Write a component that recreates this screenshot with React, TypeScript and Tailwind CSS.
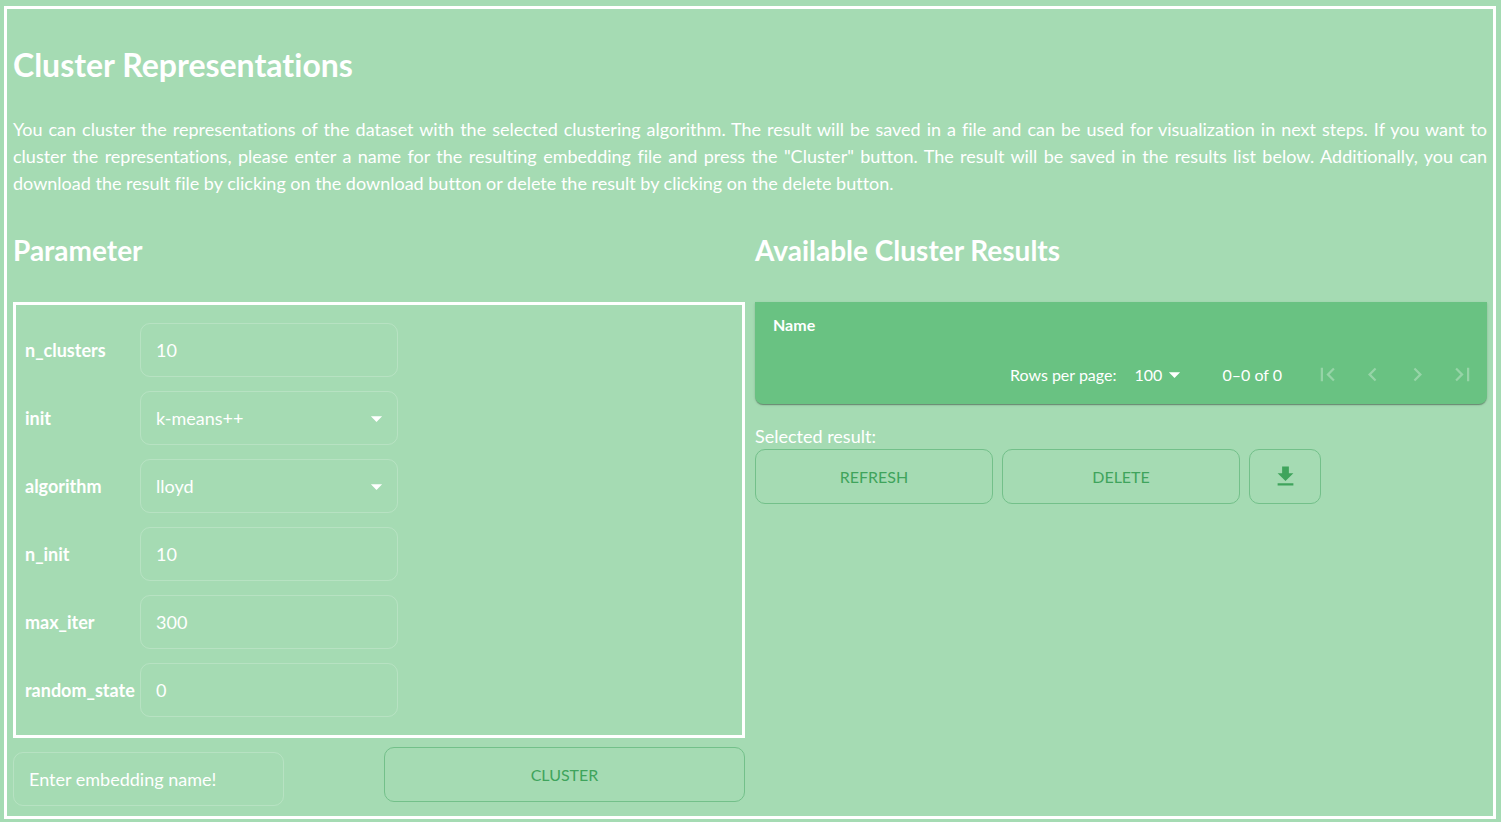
import { useState } from "react";
import type { ReactNode } from "react";
import { MdArrowDropDown, MdChevronLeft, MdChevronRight, MdFirstPage, MdLastPage } from "react-icons/md";

type Field = { name: string; value: string; options?: string[] };

const fields: Field[] = [
  { name: "n_clusters", value: "10" },
  { name: "init", value: "k-means++", options: ["k-means++", "random"] },
  { name: "algorithm", value: "lloyd", options: ["lloyd", "elkan"] },
  { name: "n_init", value: "10" },
  { name: "max_iter", value: "300" },
  { name: "random_state", value: "0" },
];

const control =
  "h-[54px] w-full appearance-none rounded-[10px] border border-white/20 bg-transparent px-[15px] text-[18px] text-white outline-none placeholder:text-white placeholder:opacity-100 focus:border-white";

function ParameterField({ field }: { field: Field }) {
  const [value, setValue] = useState(field.value);
  return (
    <>
      <label htmlFor={field.name} className="pr-1 font-bold">
        {field.name}
      </label>
      {field.options ? (
        <div className="grid items-center">
          <select
            id={field.name}
            value={value}
            onChange={(e) => setValue(e.target.value)}
            className={`${control} col-start-1 row-start-1`}
          >
            {field.options.map((o) => (
              <option key={o} className="text-gray-800">
                {o}
              </option>
            ))}
          </select>
          <MdArrowDropDown className="pointer-events-none col-start-1 row-start-1 mr-2 size-[27px] justify-self-end" />
        </div>
      ) : (
        <input id={field.name} value={value} onChange={(e) => setValue(e.target.value)} className={control} />
      )}
    </>
  );
}

function OutlineButton({ className, label, children }: { className: string; label?: string; children: ReactNode }) {
  return (
    <button
      type="button"
      aria-label={label}
      className={`flex h-[55px] items-center justify-center rounded-[10px] border border-[#73c08a] text-[16px] text-[#3fa45c] uppercase hover:bg-white/10 ${className}`}
    >
      {children}
    </button>
  );
}

function PageButton({ label, children }: { label: string; children: ReactNode }) {
  return (
    <button
      type="button"
      disabled
      aria-label={label}
      className="flex h-[45px] w-[45px] items-center justify-center text-[27px] text-white/30"
    >
      {children}
    </button>
  );
}

function ResultsTable() {
  return (
    <div className="rounded-b-[8px] bg-[#69c282] pb-[2px] shadow-[0_2px_1px_-1px_rgba(0,0,0,0.2),0_1px_1px_rgba(0,0,0,0.14),0_1px_3px_rgba(0,0,0,0.12)]">
      <table className="w-full text-left text-[16px]">
        <thead>
          <tr>
            <th scope="col" className="h-[45px] px-[18px] font-bold">
              Name
            </th>
          </tr>
        </thead>
      </table>
      <div className="flex h-[55px] items-center justify-end pr-[2px] text-[16px]">
        <label htmlFor="rows">Rows per page:</label>
        <div className="ml-[18px] grid items-center">
          <select
            id="rows"
            defaultValue="100"
            className="col-start-1 row-start-1 w-[54px] appearance-none bg-transparent outline-none"
          >
            <option className="text-gray-800">50</option>
            <option className="text-gray-800">100</option>
          </select>
          <MdArrowDropDown className="pointer-events-none col-start-1 row-start-1 size-[27px] justify-self-end" />
        </div>
        <span className="ml-[34px]">0–0 of 0</span>
        <div className="ml-[23px] flex">
          <PageButton label="First page">
            <MdFirstPage />
          </PageButton>
          <PageButton label="Previous page">
            <MdChevronLeft />
          </PageButton>
          <PageButton label="Next page">
            <MdChevronRight />
          </PageButton>
          <PageButton label="Last page">
            <MdLastPage />
          </PageButton>
        </div>
      </div>
    </div>
  );
}

export default function App() {
  return (
    <div className="min-h-screen bg-[#a5dbb3] pt-[6px] pr-[5px] pb-[3px] pl-1 font-['Lato',sans-serif] text-[18px] leading-[27px] text-white [font-variant-ligatures:none]">
      <main className="border-[3px] border-white px-[6px] pb-[10px]">
        <h1 className="pt-9 text-[32px] leading-[40px] font-bold">Cluster Representations</h1>
        <p className="mt-[31px] text-justify leading-[27px]">
          You can cluster the representations of the dataset with the selected clustering algorithm. The result will be
          saved in a file and can be used for visualization in next steps. If you want to cluster the representations,
          please enter a name for the resulting embedding file and press the "Cluster" button. The result will be saved
          in the results list below. Additionally, you can download the result file by clicking on the download button
          or delete the result by clicking on the delete button.
        </p>

        <div className="mt-[37px] grid grid-cols-2 gap-[10px]">
          <section>
            <h2 className="text-[28px] leading-[32px] font-bold">Parameter</h2>
            <div className="mt-9 grid grid-cols-[115px_258px] items-center gap-y-[14px] border-[3px] border-white py-[18px] pl-[9px]">
              {fields.map((f) => (
                <ParameterField key={f.name} field={f} />
              ))}
            </div>
            <div className="mt-[9px] flex items-start justify-between">
              <div className="w-[271px] pt-[5px]">
                <input aria-label="Embedding name" placeholder="Enter embedding name!" className={control} />
              </div>
              <OutlineButton className="w-[361px]">Cluster</OutlineButton>
            </div>
          </section>

          <section>
            <h2 className="text-[28px] leading-[32px] font-bold">Available Cluster Results</h2>
            <div className="mt-9">
              <ResultsTable />
            </div>
            <div className="mt-5 leading-[25px]">Selected result:</div>
            <div className="flex gap-[9px]">
              <OutlineButton className="w-[238px]">Refresh</OutlineButton>
              <OutlineButton className="w-[238px]">Delete</OutlineButton>
              <OutlineButton className="w-[72px]" label="Download">
                <svg viewBox="0 0 24 24" className="size-[27px]" fill="currentColor" aria-hidden="true">
                  <path d="M19 9h-4V3H9v6H5l7 7 7-7zM5 18v2h14v-2H5z" />
                </svg>
              </OutlineButton>
            </div>
          </section>
        </div>
      </main>
    </div>
  );
}
